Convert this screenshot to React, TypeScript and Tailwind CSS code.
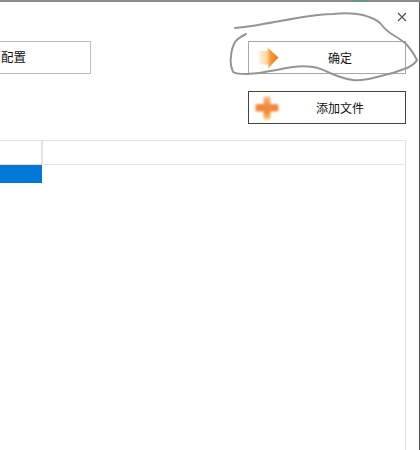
const cjk = { fontFamily: '"Noto Sans CJK SC", "Liberation Sans", sans-serif' };

function Arrow() {
  return (
    <svg width="21" height="22" viewBox="0 0 21 22" className="blur-[0.7px]">
      <defs>
        <linearGradient id="ar" x1="0" y1="0" x2="1" y2="0">
          <stop offset="0" stopColor="#fdf6e6" />
          <stop offset="0.4" stopColor="#fbd7a4" />
          <stop offset="0.6" stopColor="#f89a3a" />
          <stop offset="1" stopColor="#f0720c" />
        </linearGradient>
      </defs>
      <path d="M0.5 4H9.5V0.5L20.5 10.5L10 21.5V17.5H0.5Z" fill="url(#ar)" />
    </svg>
  );
}

function Plus() {
  return (
    <svg width="24" height="24" viewBox="0 0 24 24" className="blur-[0.8px]">
      <defs>
        <linearGradient id="pl" x1="0" y1="0" x2="0" y2="1">
          <stop offset="0" stopColor="#fac08a" />
          <stop offset="0.45" stopColor="#f0843a" />
          <stop offset="0.7" stopColor="#f28f38" />
          <stop offset="1" stopColor="#fbcb78" />
        </linearGradient>
      </defs>
      <path d="M8.5 2Q8.5 0.5 10 0.5H14Q15.5 0.5 15.5 2V8H22Q23.5 8 23.5 9.5V14Q23.5 15.5 22 15.5H15.5V22Q15.5 23.5 14 23.5H10Q8.5 23.5 8.5 22V15.5H2Q0.5 15.5 0.5 14V9.5Q0.5 8 2 8H8.5Z" fill="url(#pl)" />
    </svg>
  );
}

export default function App() {
  return (
    <div className="relative flex h-[450px] w-[420px] flex-col overflow-hidden bg-white" style={cjk}>
      <div className="flex h-[2px] shrink-0 bg-[#8c8c8c]">
        <div className="ml-[352px] w-[16px] bg-[#6f938a]" />
      </div>
      <div className="flex flex-1 flex-col border-r border-[#555] pr-[13px]">
        <div className="flex h-[39px] justify-end pt-[10px]">
          <svg width="10" height="10" viewBox="0 0 10 10" className="mr-[-1px]" stroke="#555" strokeWidth="1.2">
            <path d="M1 1L9 9M9 1L1 9" />
          </svg>
        </div>
        <div className="flex h-[33px] items-stretch justify-between">
          <div className="flex w-[91px] items-center border border-l-0 border-[#bdbdbd] text-[12.5px] text-[#111]">
            <span className="ml-[1px]">配置</span>
          </div>
          <div className="flex w-[158px] items-center border border-[#a8a8a8] text-[12px] text-[#111]">
            <span className="ml-[9px] flex w-[21px] justify-center"><Arrow /></span>
            <span className="ml-[49px]">确定</span>
          </div>
        </div>
        <div className="mt-[17px] flex h-[33px] justify-end">
          <div className="flex w-[158px] items-center border border-[#444] text-[12px] text-[#111]">
            <span className="ml-[6px] flex w-[24px] justify-center"><Plus /></span>
            <span className="ml-[37px]">添加文件</span>
          </div>
        </div>
        <div className="mt-[16px] flex flex-1 flex-col border-t border-r border-[#e2e2e2]">
          <div className="flex h-[24px] border-b border-[#e6e6e6]">
            <div className="w-[43px] border-r-2 border-[#e2e2e2]" />
          </div>
          <div className="h-[18px] w-[42px] bg-[#0078d7]" />
        </div>
      </div>
      <svg className="absolute inset-0 blur-[0.4px]" width="420" height="450" fill="none" stroke="#959595" strokeWidth="2" strokeLinecap="round" strokeLinejoin="round">
        <path d="M235 28C245 27 255 26 263 24C275 22 286 20 297 18C309 16 321 14 333 14C344 13 354 13 363 15C370 17 376 19 380 23C383 27 386 30 390 33C395 36 400 39 405 43C410 48 414 54 417 60C415 64 411 66 407 68C397 72 387 75 377 77C369 79 361 81 353 80C345 79 337 76 330 73C324 70 319 68 313 67C306 66 300 66 293 67C285 68 278 70 270 71C262 73 255 74 247 74C241 74 236 74 233 72C231 67 230 62 231 57C231 51 233 46 235 42C238 38 242 36 246 34" />
      </svg>
    </div>
  );
}
